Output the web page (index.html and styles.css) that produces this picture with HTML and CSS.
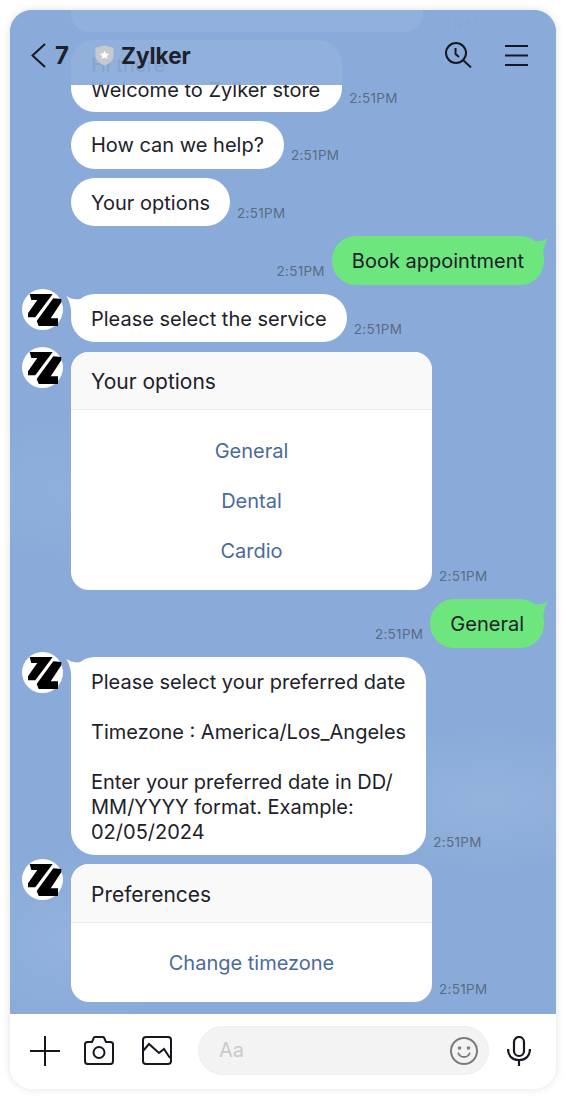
FILE: index.html
```html
<!DOCTYPE html>
<html>
<head>
  <meta charset="UTF-8">
  <link rel="stylesheet" href="styles.css">
</head>
<body>
  <div class="phone">
    <div class="topbar">
      <div class="topbar-left">
        <svg class="back" width="15" height="25" viewBox="0 0 15 25"><path d="M14 1 1.500 12.500 14 24" fill="none" stroke="#15181e" stroke-width="2"/></svg>
        <span class="unread">7</span>
        <svg class="shield" width="19" height="21" viewBox="0 0 20 24" preserveAspectRatio="none"><path d="M10 0.500 19.500 3v9.500c0 5-4 8.500-9.500 11-5.500-2.500-9.500-6-9.500-11V3z" fill="#c6c9ce"/><path d="m10 6.500 1.500 3.300 3.500.4-2.600 2.400.7 3.500L10 14.400l-3.100 1.700.7-3.500L5 10.200l3.500-.4z" fill="#fff"/></svg>
        <span class="title">Zylker</span>
      </div>
      <div class="topbar-right">
        <svg width="27" height="26" viewBox="0 0 27 26" fill="none" stroke="#15181e" stroke-width="2"><circle cx="11" cy="11" r="10"/><path d="m18 18 8 7.500"/><path d="M10.500 6v6l3.500 3"/></svg>
        <svg width="23" height="21" viewBox="0 0 23 21" fill="none" stroke="#15181e" stroke-width="2"><path d="M0 1h23M0 10.500h23M0 20h23"/></svg>
      </div>
    </div>

    <div class="chat">
      <div class="row clipped">
        <div class="bubble ghost"></div>
        <span class="time">2:51PM</span>
      </div>
      <div class="row">
        <div class="bubble greet">Hi there<br>Welcome to Zylker store</div>
        <span class="time">2:51PM</span>
      </div>
      <div class="row">
        <div class="bubble">How can we help?</div>
        <span class="time">2:51PM</span>
      </div>
      <div class="row">
        <div class="bubble">Your options</div>
        <span class="time">2:51PM</span>
      </div>
      <div class="row mine">
        <span class="time">2:51PM</span>
        <div class="bubble green">Book appointment</div>
      </div>
      <div class="row">
        <svg class="avatar" width="41" height="41" viewBox="0 0 41 41"><use href="#zlogo"/></svg>
        <div class="bubble tail">Please select the service</div>
        <span class="time">2:51PM</span>
      </div>
      <div class="row">
        <svg class="avatar" width="41" height="41" viewBox="0 0 41 41"><use href="#zlogo"/></svg>
        <div class="card">
          <div class="card-title">Your options</div>
          <div class="card-body">
            <a>General</a>
            <a>Dental</a>
            <a>Cardio</a>
          </div>
        </div>
        <span class="time">2:51PM</span>
      </div>
      <div class="row mine">
        <span class="time">2:51PM</span>
        <div class="bubble green">General</div>
      </div>
      <div class="row">
        <svg class="avatar" width="41" height="41" viewBox="0 0 41 41"><use href="#zlogo"/></svg>
        <div class="bubble tail">Please select your preferred date<br><br>Timezone : America/Los_Angeles<br><br>Enter your preferred date in DD/<br>MM/YYYY format. Example:<br>02/05/2024</div>
        <span class="time">2:51PM</span>
      </div>
      <div class="row last">
        <svg class="avatar" width="41" height="41" viewBox="0 0 41 41"><use href="#zlogo"/></svg>
        <div class="card">
          <div class="card-title">Preferences</div>
          <div class="card-body">
            <a>Change timezone</a>
          </div>
        </div>
        <span class="time">2:51PM</span>
      </div>
    </div>

    <div class="footer">
      <svg width="30" height="30" viewBox="0 0 30 30" fill="none" stroke="#15181e" stroke-width="2"><path d="M0 15h30M15 0v30"/></svg>
      <svg class="camera" width="30" height="29" viewBox="0 0 30 29" fill="none" stroke="#15181e" stroke-width="2"><path d="M3.500 6H8l2-4.500c.2-.4.500-.5 1-.5h8c.500 0 .8.100 1 .5L22 6h4.500C28 6 29 7 29 8.500V25c0 1.500-1 3-2.500 3h-23C2 28 1 26.500 1 25V8.500C1 7 2 6 3.500 6z"/><circle cx="15" cy="16.500" r="5.500"/></svg>
      <svg class="picture" width="30" height="29" viewBox="0 0 30 29" fill="none" stroke="#15181e" stroke-width="2"><rect x="1" y="1" width="28" height="27" rx="3"/><path d="m1 15 6-7 10 9 5-4 6 9"/></svg>
      <div class="input">
        <span class="placeholder">Aa</span>
        <svg width="28" height="28" viewBox="0 0 28 28" fill="none" stroke="#7b7b7b" stroke-width="2"><circle cx="14" cy="14" r="13"/><circle cx="9.500" cy="11" r=".8"/><circle cx="18.500" cy="11" r=".8"/><path d="M8.500 16.500c1 2.500 3 3.500 5.500 3.500s4.500-1 5.500-3.500" stroke-linecap="round"/></svg>
      </div>
      <svg class="mic" width="24" height="30" viewBox="0 0 24 30" fill="none" stroke="#15181e" stroke-width="2.200"><rect x="7" y="1" width="10" height="19" rx="5"/><path d="M1 13c0 7 4.500 11 11 11s11-4 11-11M12 24v6"/></svg>
    </div>
  </div>

  <svg class="defs" width="0" height="0">
    <symbol id="zlogo" viewBox="0 0 41 41">
      <circle cx="20.500" cy="20.500" r="20.500" fill="#fff"/>
      <path d="M7.700 5H30.700L13.300 28.300H6v-4L15.300 11H9.300z" fill="#000"/>
      <path d="M31.300 9.300 39.300 10v3.300L28.700 29.300H36V37H16.700L14.700 32z" fill="#000"/>
    </symbol>
  </svg>
</body>
</html>
```

FILE: styles.css
```css
body {
  margin: 0;
  padding: 10px;
  background: #fff;
  font-family: Inter, "Noto Sans", sans-serif;
  font-size: 20px;
  line-height: 25px;
  color: #1d2129;
}
.phone {
  position: relative;
  display: flex;
  flex-direction: column;
  width: 546px;
  height: 1079px;
  border-radius: 22px;
  overflow: hidden;
  box-shadow: 0 0 8px rgba(0, 0, 0, .12);
}
.defs {
  position: absolute;
}

/* header sits over the chat, bubbles show through it */
.topbar {
  position: absolute;
  top: 0;
  left: 0;
  right: 0;
  z-index: 2;
  height: 75px;
  padding: 0 28px 0 21px;
  box-sizing: border-box;
  display: flex;
  justify-content: space-between;
  align-items: flex-start;
  background: rgba(138, 171, 217, .94);
}
.topbar-left {
  display: flex;
  align-items: center;
  margin-top: 33px;
}
.topbar-right {
  display: flex;
  align-items: center;
  gap: 33px;
  margin-top: 32px;
}
.unread {
  margin-left: 9px;
  font-size: 24px;
  font-weight: 700;
}
.shield {
  margin-left: 26px;
}
.title {
  margin-left: 7px;
  font-size: 22.500px;
  font-weight: 700;
}

.chat {
  flex: 1;
  min-height: 0;
  padding-left: 12px;
  padding-right: 12px;
  display: flex;
  flex-direction: column;
  gap: 9.400px;
  overflow: hidden;
  background-color: #8aabd9;
  background-image:
    radial-gradient(ellipse 130px 70px at 60px 480px, rgba(255, 255, 255, .05), transparent),
    radial-gradient(ellipse 160px 70px at 480px 790px, rgba(255, 255, 255, .09), transparent),
    radial-gradient(ellipse 120px 90px at 60px 930px, rgba(255, 255, 255, .08), transparent);
}
.row {
  display: flex;
  align-items: flex-end;
  gap: 7px;
  padding-left: 49px;
  position: relative;
}
.row.mine {
  justify-content: flex-end;
  padding-left: 0;
}
.row.last {
  margin-top: -.4px;
}
.clipped {
  height: 21.500px;
  margin-bottom: -1.300px;
}
.avatar {
  position: absolute;
  left: 0;
  top: -5px;
}
.bubble {
  position: relative;
  padding: 12.500px 20px 10.500px;
  background: #fff;
  border-radius: 24px;
  white-space: nowrap;
}
.ghost {
  width: 352px;
  height: 21.500px;
  padding: 0;
  box-sizing: border-box;
  border-radius: 0 0 18px 18px;
}
.clipped .time {
  margin-bottom: 0;
}
.greet {
  padding: 13.500px 22px 8.500px 20px;
}
.green {
  padding-top: 13.500px;
  padding-bottom: 10.500px;
  background: #6ee67e;
}
.tail::before {
  content: "";
  position: absolute;
  left: -4.700px;
  top: 1.500px;
  width: 16px;
  height: 20px;
  background: #fff;
  clip-path: path("M0 0Q6 5 16 3V20H5Q5 8 0 0z");
}
.green::after {
  content: "";
  position: absolute;
  right: -4px;
  top: 2px;
  width: 16px;
  height: 20px;
  background: #6ee67e;
  clip-path: path("M16 0Q10 5 0 3V20H11Q11 8 16 0z");
}
.time {
  margin-bottom: 5.600px;
  font-size: 13.500px;
  line-height: 16px;
  letter-spacing: .3px;
  color: #5a6b84;
  white-space: nowrap;
}
.card {
  width: 361px;
  flex: none;
  border-radius: 18px;
  background: #fff;
  overflow: hidden;
}
.card-title {
  height: 58.500px;
  padding: 3px 20px 0;
  box-sizing: border-box;
  display: flex;
  align-items: center;
  font-size: 21px;
  background: #f9f9f9;
  border-bottom: 1px solid #ececec;
}
.card-body {
  display: flex;
  flex-direction: column;
  align-items: center;
  gap: 25px;
  padding: 28.500px 20px 26px;
  color: #4a6a9c;
}

.footer {
  flex: none;
  height: 75px;
  box-sizing: border-box;
  padding-left: 20px;
  padding-right: 25px;
  padding-bottom: 2px;
  display: flex;
  align-items: center;
  background: #fff;
}
.camera {
  margin-left: 24px;
}
.picture {
  margin-left: 28px;
}
.input {
  flex: 1;
  height: 49px;
  margin-left: 26px;
  margin-right: 18px;
  padding: 0 10px 0 20px;
  box-sizing: border-box;
  display: flex;
  align-items: center;
  justify-content: space-between;
  background: #f3f3f3;
  border: 1px solid #eeeeee;
  border-radius: 25px;
}
.placeholder {
  color: #c9c9c9;
}
```
